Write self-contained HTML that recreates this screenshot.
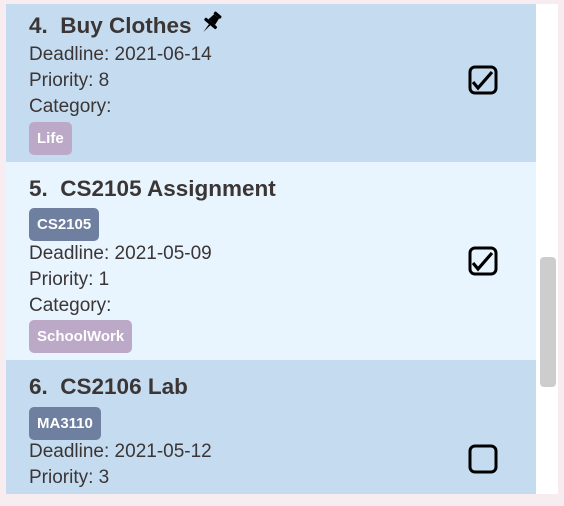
<!DOCTYPE html>
<html><head><style>
body{margin:0;width:564px;height:506px;background:#f7edf1;position:relative;overflow:hidden;font-family:"Liberation Sans",sans-serif;color:#3b3535}
.panel{position:absolute;left:6px;top:4px;width:552px;height:490px;background:#fff}
.card{position:absolute;left:6px;width:530px}
.t{position:absolute;left:29px;white-space:nowrap}
.h{font-size:22.5px;font-weight:bold}
.b{font-size:19px}
.tag{position:absolute;left:29px;height:33px;line-height:33px;padding:0 8px;border-radius:5px;color:#fff;font-weight:bold;font-size:15px}
.p{background:#bca9c8}.g{background:#6f7f9f}
.cb{position:absolute;left:468px;width:30px;height:30px}
.sb{position:absolute;left:540px;top:257px;width:16px;height:130px;background:#cdcdcd;border-radius:4px}
</style></head><body>
<div class="panel"></div>
<div class="card" style="top:4px;height:158px;background:#c5dcf0"></div>
<div class="card" style="top:162px;height:198px;background:#e8f5fe"></div>
<div class="card" style="top:360px;height:134px;background:#c5dcf0"></div>
<div class="sb"></div>

<div class="t h" style="top:10px">4.&nbsp; Buy Clothes <svg width="26" height="26" viewBox="0 0 24 24" style="vertical-align:-3px"><g transform="rotate(40 12 12)"><rect x="8" y="1" width="8" height="3" rx="1"/><path d="M9 4h6l1 7H8z"/><rect x="5" y="11" width="14" height="3" rx="1"/><path d="M11.2 14h1.6l-.8 9z"/></g></svg></div>
<div class="t b" style="top:44px">Deadline: 2021-06-14</div>
<div class="t b" style="top:70px">Priority: 8</div>
<div class="t b" style="top:96px">Category:</div>
<div class="tag p" style="top:122px">Life</div>

<div class="t h" style="top:176px">5.&nbsp; CS2105 Assignment</div>
<div class="tag g" style="top:208px">CS2105</div>
<div class="t b" style="top:243px">Deadline: 2021-05-09</div>
<div class="t b" style="top:269px">Priority: 1</div>
<div class="t b" style="top:295px">Category:</div>
<div class="tag p" style="top:320px">SchoolWork</div>

<div class="t h" style="top:374px">6.&nbsp; CS2106 Lab</div>
<div class="tag g" style="top:407px">MA3110</div>
<div class="t b" style="top:441px">Deadline: 2021-05-12</div>
<div class="t b" style="top:467px">Priority: 3</div>

<svg class="cb" style="top:65px" viewBox="0 0 30 30"><rect x="2" y="2" width="26" height="26" rx="5" fill="none" stroke="#000" stroke-width="3"/><path d="M5 17l5 6L24 7" fill="none" stroke="#000" stroke-width="3.2"/></svg>
<svg class="cb" style="top:246px" viewBox="0 0 30 30"><rect x="2" y="2" width="26" height="26" rx="5" fill="none" stroke="#000" stroke-width="3"/><path d="M5 17l5 6L24 7" fill="none" stroke="#000" stroke-width="3.2"/></svg>
<svg class="cb" style="top:444px" viewBox="0 0 30 30"><rect x="2" y="2" width="26" height="26" rx="5" fill="none" stroke="#000" stroke-width="3"/></svg>
</body></html>
